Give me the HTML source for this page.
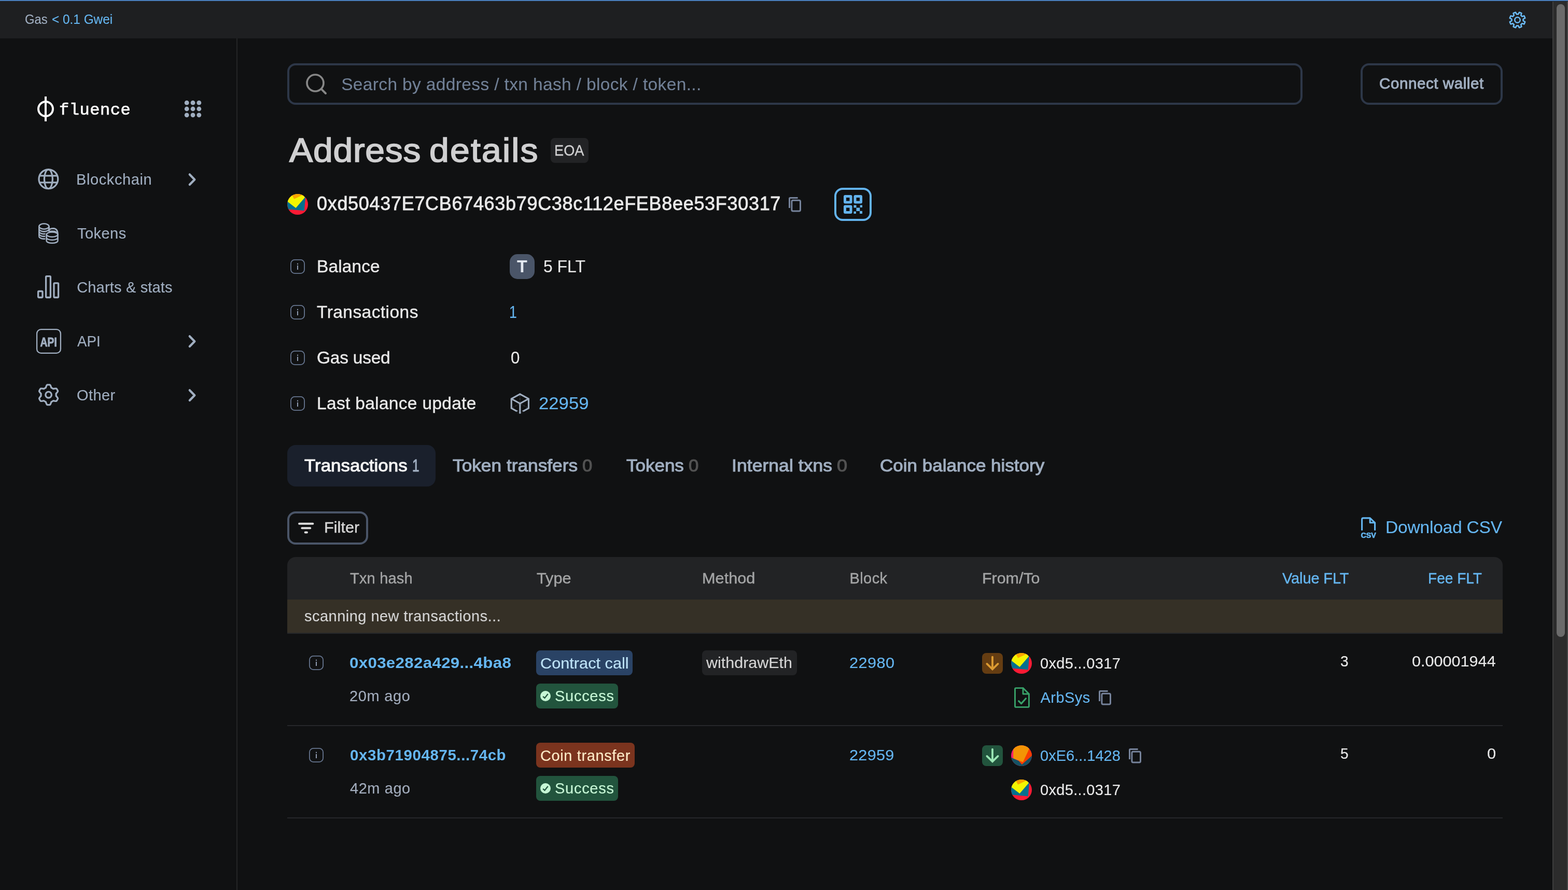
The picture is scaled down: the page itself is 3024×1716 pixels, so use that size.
<!DOCTYPE html>
<html lang="en">
<head>
<meta charset="utf-8">
<title>Address details - Fluence Explorer</title>
<style>
html,body{margin:0;padding:0;background:#101112;}
body{width:3024px;height:1716px;overflow:hidden;position:relative;font-family:"Liberation Sans", sans-serif;}
#app{position:absolute;left:0;top:0;width:3024px;height:1716px;overflow:hidden;will-change:transform;}
.a{position:absolute;box-sizing:border-box;}
.t{white-space:pre;margin:0;padding:0;font-weight:400;}
</style>
</head>
<body>
<div id="app">
<div class="a" style="left:0px;top:0px;width:2994px;height:74px;background:#1e1f21;"></div>
<div class="a" style="left:0px;top:0px;width:3024px;height:2px;background:#4a7fbd;"></div>
<div class="a" style="left:0px;top:2px;width:3024px;height:1px;background:#191a1b;"></div>
<span class="a t" style='left:48.00px;top:25px;color:#a0aec0;font-size:25px;line-height:25px;transform:scaleX(0.9545);transform-origin:0 0;-webkit-text-stroke:0.14px #a0aec0;'>Gas</span>
<span class="a t" style='left:99.50px;top:25px;color:#65b6f1;font-size:25px;line-height:25px;transform:scaleX(0.9745);transform-origin:0 0;-webkit-text-stroke:0.14px #65b6f1;'>&lt; 0.1 Gwei</span>
<div class="a" style="left:2994px;top:3px;width:30px;height:1713px;background:#2c2c2c;"></div>
<div class="a" style="left:2994px;top:3px;width:2px;height:1713px;background:#3e3e3e;"></div>
<div class="a" style="left:3022px;top:3px;width:2px;height:1713px;background:#474747;"></div>
<div class="a" style="left:3002px;top:8px;width:16px;height:1220px;background:#6b6b6b;border-radius:8px;"></div>
<div class="a" style="left:456px;top:74px;width:2px;height:1642px;background:#242526;"></div>
<svg class="a" style="left:68px;top:182px;" width="40" height="56" viewBox="0 0 40 56"><circle cx="20" cy="28" r="14" fill="none" stroke="#fff" stroke-width="4"/><rect x="18" y="4" width="4" height="48" fill="#fff"/></svg>
<span class="a t" style='left:114.34px;top:197px;color:#ffffff;font-size:32px;line-height:32px;font-family:"Liberation Mono", monospace;letter-spacing:0.583px;transform:scaleX(0.9988);transform-origin:0 0;-webkit-text-stroke:0.7px #ffffff;'>fluence</span>
<svg class="a" style="left:354px;top:192px;" width="36" height="36" viewBox="0 0 36 36"><circle cx="6.2" cy="6.2" r="4.4" fill="#a0aec0"/><circle cx="18" cy="6.2" r="4.4" fill="#a0aec0"/><circle cx="29.8" cy="6.2" r="4.4" fill="#a0aec0"/><circle cx="6.2" cy="18" r="4.4" fill="#a0aec0"/><circle cx="18" cy="18" r="4.4" fill="#a0aec0"/><circle cx="29.8" cy="18" r="4.4" fill="#a0aec0"/><circle cx="6.2" cy="29.8" r="4.4" fill="#a0aec0"/><circle cx="18" cy="29.8" r="4.4" fill="#a0aec0"/><circle cx="29.8" cy="29.8" r="4.4" fill="#a0aec0"/></svg>
<span class="a t" style='left:147.17px;top:332px;color:#a0aec0;font-size:29px;line-height:29px;letter-spacing:0.611px;transform:scaleX(0.9988);transform-origin:0 0;-webkit-text-stroke:0.14px #a0aec0;'>Blockchain</span>
<svg class="a" style="left:356px;top:330px;" width="28" height="32" viewBox="0 0 28 32"><path d="M9.8 6.4 L19.3 16.2 L9.8 26" fill="none" stroke="#a0aec0" stroke-width="4.3" stroke-linecap="round" stroke-linejoin="round"/></svg>
<span class="a t" style='left:148.83px;top:436px;color:#a0aec0;font-size:29px;line-height:29px;letter-spacing:0.433px;transform:scaleX(1.0018);transform-origin:0 0;-webkit-text-stroke:0.14px #a0aec0;'>Tokens</span>
<span class="a t" style='left:148.17px;top:540px;color:#a0aec0;font-size:29px;line-height:29px;letter-spacing:0.179px;-webkit-text-stroke:0.14px #a0aec0;'>Charts &amp; stats</span>
<span class="a t" style='left:149.00px;top:644px;color:#a0aec0;font-size:29px;line-height:29px;transform:scaleX(0.9534);transform-origin:0 0;-webkit-text-stroke:0.14px #a0aec0;'>API</span>
<svg class="a" style="left:356px;top:642px;" width="28" height="32" viewBox="0 0 28 32"><path d="M9.8 6.4 L19.3 16.2 L9.8 26" fill="none" stroke="#a0aec0" stroke-width="4.3" stroke-linecap="round" stroke-linejoin="round"/></svg>
<span class="a t" style='left:148.17px;top:748px;color:#a0aec0;font-size:29px;line-height:29px;letter-spacing:0.458px;transform:scaleX(0.9977);transform-origin:0 0;-webkit-text-stroke:0.14px #a0aec0;'>Other</span>
<svg class="a" style="left:356px;top:746px;" width="28" height="32" viewBox="0 0 28 32"><path d="M9.8 6.4 L19.3 16.2 L9.8 26" fill="none" stroke="#a0aec0" stroke-width="4.3" stroke-linecap="round" stroke-linejoin="round"/></svg>
<div class="a" style="left:554px;top:122px;width:1958px;height:80px;border-radius:16px;border:4px solid #2d3748;"></div>
<svg class="a" style="left:586px;top:138px;" width="48" height="48" viewBox="0 0 48 48"><circle cx="22" cy="22" r="16" fill="none" stroke="#878787" stroke-width="3.7"/><path d="M33.6 33.6 L42 42" stroke="#878787" stroke-width="4" stroke-linecap="round"/></svg>
<span class="a t" style='left:658.17px;top:146px;color:#718096;font-size:33.5px;line-height:33.5px;letter-spacing:0.355px;-webkit-text-stroke:0.14px #718096;'>Search by address / txn hash / block / token...</span>
<div class="a" style="left:2624px;top:122px;width:274px;height:80px;border-radius:16px;border:4px solid #2d3748;"></div>
<span class="a t" style='left:2659.50px;top:146px;color:#a0aec0;font-size:29.5px;line-height:29.5px;letter-spacing:0.577px;transform:scaleX(1.0008);transform-origin:0 0;-webkit-text-stroke:1.0px #a0aec0;'>Connect wallet</span>
<h1 style="margin:0;font-size:inherit;font-weight:inherit">
<span class="a t" style='left:558.00px;top:258px;color:#d0d0d1;font-size:64px;line-height:64px;letter-spacing:0.724px;transform:scaleX(1.0600);transform-origin:0 0;-webkit-text-stroke:1.7px #d0d0d1;'>Address </span>
<span class="a t" style='left:827.50px;top:258px;color:#d0d0d1;font-size:64px;line-height:64px;letter-spacing:2.057px;transform:scaleX(1.0617);transform-origin:0 0;-webkit-text-stroke:1.7px #d0d0d1;'>details</span>
</h1>
<div class="a" style="left:1062px;top:266px;width:73px;height:48px;background:#222325;border-radius:8px;"></div>
<span class="a t" style='left:1068.51px;top:276px;color:#d0d0d1;font-size:29px;line-height:29px;transform:scaleX(0.9379);transform-origin:0 0;-webkit-text-stroke:0.3px #d0d0d1;'>EOA</span>
<span class="a t" style='left:611.00px;top:375px;color:#e9e9e9;font-size:36px;line-height:36px;letter-spacing:0.691px;-webkit-text-stroke:0.8px #e9e9e9;'>0xd50437E7CB67463b79C38c112eFEB8ee53F30317</span>
<span class="a t" style='left:610.73px;top:497px;color:#e9e9e9;font-size:33.5px;line-height:33.5px;letter-spacing:0.100px;transform:scaleX(0.9994);transform-origin:0 0;-webkit-text-stroke:0.4px #e9e9e9;'>Balance</span>
<span class="a t" style='left:611.33px;top:585px;color:#e9e9e9;font-size:33.5px;line-height:33.5px;letter-spacing:0.448px;transform:scaleX(0.9997);transform-origin:0 0;-webkit-text-stroke:0.4px #e9e9e9;'>Transactions</span>
<span class="a t" style='left:610.67px;top:673px;color:#e9e9e9;font-size:33.5px;line-height:33.5px;letter-spacing:-0.214px;transform:scaleX(0.9988);transform-origin:0 0;-webkit-text-stroke:0.4px #e9e9e9;'>Gas used</span>
<span class="a t" style='left:610.74px;top:761px;color:#e9e9e9;font-size:33.5px;line-height:33.5px;letter-spacing:0.335px;transform:scaleX(0.9990);transform-origin:0 0;-webkit-text-stroke:0.4px #e9e9e9;'>Last balance update</span>
<div class="a" style="left:983px;top:490px;width:48px;height:48px;background:#4a5568;border-radius:15px;"></div>
<span class="a t" style='left:997.17px;top:497px;color:#e4e9f1;font-size:33px;line-height:33px;font-weight:700;transform:scaleX(0.9828);transform-origin:0 0;'>T</span>
<span class="a t" style='left:1047.86px;top:497px;color:#e9e9e9;font-size:33.5px;line-height:33.5px;transform:scaleX(0.9510);transform-origin:0 0;-webkit-text-stroke:0.14px #e9e9e9;'>5 FLT</span>
<span class="a t" style='left:982.47px;top:585px;color:#65b6f1;font-size:33.5px;line-height:33.5px;transform:scaleX(0.7956);transform-origin:0 0;-webkit-text-stroke:0.14px #65b6f1;'>1</span>
<span class="a t" style='left:984.52px;top:673px;color:#e9e9e9;font-size:33.5px;line-height:33.5px;transform:scaleX(0.9339);transform-origin:0 0;-webkit-text-stroke:0.14px #e9e9e9;'>0</span>
<span class="a t" style='left:1039.33px;top:761px;color:#65b6f1;font-size:33.5px;line-height:33.5px;transform:scaleX(1.0363);transform-origin:0 0;-webkit-text-stroke:0.14px #65b6f1;'>22959</span>
<div class="a" style="left:554px;top:858px;width:286px;height:80px;background:#1a202c;border-radius:16px;"></div>
<span class="a t" style='left:587.17px;top:881px;color:#f4f4f4;font-size:33.5px;line-height:33.5px;transform:scaleX(1.0423);transform-origin:0 0;-webkit-text-stroke:1.05px #f4f4f4;'>Transactions</span>
<span class="a t" style='left:794.69px;top:881px;color:#a0aec0;font-size:33.5px;line-height:33.5px;transform:scaleX(0.7236);transform-origin:0 0;-webkit-text-stroke:1.05px #a0aec0;'>1</span>
<span class="a t" style='left:873.17px;top:881px;color:#a0aec0;font-size:33.5px;line-height:33.5px;transform:scaleX(1.0526);transform-origin:0 0;-webkit-text-stroke:1.05px #a0aec0;'>Token transfers</span>
<span class="a t" style='left:1123.33px;top:881px;color:#525252;font-size:33.5px;line-height:33.5px;transform:scaleX(1.0385);transform-origin:0 0;-webkit-text-stroke:1.05px #525252;'>0</span>
<span class="a t" style='left:1208.17px;top:881px;color:#a0aec0;font-size:33.5px;line-height:33.5px;transform:scaleX(1.0445);transform-origin:0 0;-webkit-text-stroke:1.05px #a0aec0;'>Tokens</span>
<span class="a t" style='left:1328.33px;top:881px;color:#525252;font-size:33.5px;line-height:33.5px;transform:scaleX(1.0385);transform-origin:0 0;-webkit-text-stroke:1.05px #525252;'>0</span>
<span class="a t" style='left:1410.84px;top:881px;color:#a0aec0;font-size:33.5px;line-height:33.5px;letter-spacing:0.060px;transform:scaleX(1.0591);transform-origin:0 0;-webkit-text-stroke:1.05px #a0aec0;'>Internal txns</span>
<span class="a t" style='left:1613.83px;top:881px;color:#525252;font-size:33.5px;line-height:33.5px;transform:scaleX(1.0770);transform-origin:0 0;-webkit-text-stroke:1.05px #525252;'>0</span>
<span class="a t" style='left:1697.17px;top:881px;color:#a0aec0;font-size:33.5px;line-height:33.5px;transform:scaleX(1.0451);transform-origin:0 0;-webkit-text-stroke:1.05px #a0aec0;'>Coin balance history</span>
<div class="a" style="left:554px;top:986px;width:156px;height:64px;border-radius:16px;border:4px solid #4a5568;"></div>
<svg class="a" style="left:572px;top:1002px;" width="36" height="32" viewBox="0 0 36 32"><path d="M5 7.7H31.4M10.3 16.2H26.3M16.6 24.5H20" stroke="#dcdcdc" stroke-width="3.9" stroke-linecap="round" fill="none"/></svg>
<span class="a t" style='left:625.17px;top:1003px;color:#d8d8d8;font-size:29px;line-height:29px;letter-spacing:0.025px;transform:scaleX(1.0573);transform-origin:0 0;-webkit-text-stroke:0.35px #d8d8d8;'>Filter</span>
<span class="a t" style='left:2672.03px;top:1000px;color:#65b6f1;font-size:33.5px;line-height:33.5px;letter-spacing:-0.185px;transform:scaleX(0.9999);transform-origin:0 0;-webkit-text-stroke:0.14px #65b6f1;'>Download CSV</span>
<div class="a" style="left:554px;top:1074px;width:2344px;height:82px;background:#222325;border-radius:16px 16px 0 0;"></div>
<span class="a t" style='left:675.17px;top:1101px;color:#a4a5a6;font-size:29px;line-height:29px;letter-spacing:0.167px;transform:scaleX(1.0014);transform-origin:0 0;-webkit-text-stroke:0.4px #a4a5a6;'>Txn hash</span>
<span class="a t" style='left:1034.67px;top:1101px;color:#a4a5a6;font-size:29px;line-height:29px;transform:scaleX(1.0598);transform-origin:0 0;-webkit-text-stroke:0.4px #a4a5a6;'>Type</span>
<span class="a t" style='left:1353.97px;top:1101px;color:#a4a5a6;font-size:29px;line-height:29px;transform:scaleX(1.0588);transform-origin:0 0;-webkit-text-stroke:0.4px #a4a5a6;'>Method</span>
<span class="a t" style='left:1638.50px;top:1101px;color:#a4a5a6;font-size:29px;line-height:29px;letter-spacing:0.417px;-webkit-text-stroke:0.4px #a4a5a6;'>Block</span>
<span class="a t" style='left:1893.66px;top:1101px;color:#a4a5a6;font-size:29px;line-height:29px;transform:scaleX(1.0484);transform-origin:0 0;-webkit-text-stroke:0.4px #a4a5a6;'>From/To</span>
<span class="a t" style='left:2473.00px;top:1101px;color:#65b6f1;font-size:29px;line-height:29px;letter-spacing:-0.125px;-webkit-text-stroke:0.4px #65b6f1;'>Value FLT</span>
<span class="a t" style='left:2753.50px;top:1101px;color:#65b6f1;font-size:29px;line-height:29px;transform:scaleX(0.9683);transform-origin:0 0;-webkit-text-stroke:0.4px #65b6f1;'>Fee FLT</span>
<div class="a" style="left:554px;top:1156px;width:2344px;height:64px;background:#353026;"></div>
<div class="a" style="left:554px;top:1220px;width:2344px;height:2px;background:#26272a;"></div>
<span class="a t" style='left:586.83px;top:1174px;color:#d6d6d6;font-size:29px;line-height:29px;letter-spacing:0.475px;transform:scaleX(0.9996);transform-origin:0 0;-webkit-text-stroke:0.14px #d6d6d6;'>scanning new transactions...</span>
<span class="a t" style='left:674.16px;top:1263px;color:#65b6f1;font-size:29.5px;line-height:29.5px;font-weight:700;letter-spacing:0.277px;transform:scaleX(1.0617);transform-origin:0 0;'>0x03e282a429...4ba8</span>
<span class="a t" style='left:674.17px;top:1328px;color:#a3adbd;font-size:29px;line-height:29px;letter-spacing:0.694px;transform:scaleX(0.9985);transform-origin:0 0;-webkit-text-stroke:0.14px #a3adbd;'>20m ago</span>
<div class="a" style="left:1034px;top:1254px;width:186px;height:48px;background:#2a4365;border-radius:8px;"></div>
<span class="a t" style='left:1042.17px;top:1265px;color:#bee3f8;font-size:29px;line-height:29px;transform:scaleX(1.0589);transform-origin:0 0;-webkit-text-stroke:0.14px #bee3f8;'>Contract call</span>
<div class="a" style="left:1034px;top:1318px;width:158px;height:48px;background:#22543d;border-radius:8px;"></div>
<svg class="a" style="left:1041px;top:1331px;" width="22" height="22" viewBox="0 0 22 22"><circle cx="11" cy="11" r="10" fill="#c6f6d5"/><path d="M6.2 11.8 L9.5 14.9 L15.7 7" fill="none" stroke="#22543d" stroke-width="2.3" stroke-linecap="butt" stroke-linejoin="miter"/></svg>
<span class="a t" style='left:1070.16px;top:1328px;color:#c6f6d5;font-size:29px;line-height:29px;letter-spacing:0.694px;transform:scaleX(1.0015);transform-origin:0 0;-webkit-text-stroke:0.14px #c6f6d5;'>Success</span>
<div class="a" style="left:1354px;top:1254px;width:183px;height:48px;background:#222325;border-radius:8px;"></div>
<span class="a t" style='left:1362.00px;top:1264px;color:#d6d6d6;font-size:29px;line-height:29px;transform:scaleX(1.0512);transform-origin:0 0;-webkit-text-stroke:0.14px #d6d6d6;'>withdrawEth</span>
<span class="a t" style='left:1638.17px;top:1264px;color:#65b6f1;font-size:29px;line-height:29px;letter-spacing:0.417px;transform:scaleX(1.0575);transform-origin:0 0;-webkit-text-stroke:0.14px #65b6f1;'>22980</span>
<div class="a" style="left:554px;top:1398px;width:2344px;height:2px;background:#26272a;"></div>
<span class="a t" style='left:674.50px;top:1441px;color:#65b6f1;font-size:29.5px;line-height:29.5px;font-weight:700;letter-spacing:0.583px;transform:scaleX(0.9994);transform-origin:0 0;'>0x3b71904875...74cb</span>
<span class="a t" style='left:674.83px;top:1506px;color:#a3adbd;font-size:29px;line-height:29px;letter-spacing:0.583px;transform:scaleX(0.9985);transform-origin:0 0;-webkit-text-stroke:0.14px #a3adbd;'>42m ago</span>
<div class="a" style="left:1034px;top:1432px;width:190px;height:48px;background:#7b341e;border-radius:8px;"></div>
<span class="a t" style='left:1042.17px;top:1443px;color:#feebc8;font-size:29px;line-height:29px;letter-spacing:0.597px;transform:scaleX(1.0010);transform-origin:0 0;-webkit-text-stroke:0.14px #feebc8;'>Coin transfer</span>
<div class="a" style="left:1034px;top:1496px;width:158px;height:48px;background:#22543d;border-radius:8px;"></div>
<svg class="a" style="left:1041px;top:1509px;" width="22" height="22" viewBox="0 0 22 22"><circle cx="11" cy="11" r="10" fill="#c6f6d5"/><path d="M6.2 11.8 L9.5 14.9 L15.7 7" fill="none" stroke="#22543d" stroke-width="2.3" stroke-linecap="butt" stroke-linejoin="miter"/></svg>
<span class="a t" style='left:1070.16px;top:1506px;color:#c6f6d5;font-size:29px;line-height:29px;letter-spacing:0.694px;transform:scaleX(1.0015);transform-origin:0 0;-webkit-text-stroke:0.14px #c6f6d5;'>Success</span>
<span class="a t" style='left:1638.17px;top:1442px;color:#65b6f1;font-size:29px;line-height:29px;letter-spacing:0.264px;transform:scaleX(1.0575);transform-origin:0 0;-webkit-text-stroke:0.14px #65b6f1;'>22959</span>
<div class="a" style="left:554px;top:1576px;width:2344px;height:2px;background:#26272a;"></div>
<div class="a" style="left:1894px;top:1259px;width:40px;height:40px;background:#653d12;border-radius:8px;"></div>
<div class="a" style="left:1894px;top:1437px;width:40px;height:40px;background:#22543d;border-radius:8px;"></div>
<span class="a t" style='left:2005.50px;top:1265px;color:#e9e9e9;font-size:29px;line-height:29px;letter-spacing:0.317px;transform:scaleX(1.0011);transform-origin:0 0;-webkit-text-stroke:0.14px #e9e9e9;'>0xd5...0317</span>
<span class="a t" style='left:2006.50px;top:1331px;color:#65b6f1;font-size:29px;line-height:29px;letter-spacing:0.467px;-webkit-text-stroke:0.14px #65b6f1;'>ArbSys</span>
<span class="a t" style='left:2005.50px;top:1443px;color:#65b6f1;font-size:29px;line-height:29px;letter-spacing:-0.017px;transform:scaleX(1.0011);transform-origin:0 0;-webkit-text-stroke:0.14px #65b6f1;'>0xE6...1428</span>
<span class="a t" style='left:2005.50px;top:1509px;color:#e9e9e9;font-size:29px;line-height:29px;letter-spacing:0.317px;transform:scaleX(1.0011);transform-origin:0 0;-webkit-text-stroke:0.14px #e9e9e9;'>0xd5...0317</span>
<span class="a t" style='left:2585.20px;top:1261px;color:#e9e9e9;font-size:29px;line-height:29px;transform:scaleX(0.9667);transform-origin:0 0;-webkit-text-stroke:0.14px #e9e9e9;'>3</span>
<span class="a t" style='left:2722.50px;top:1261px;color:#e9e9e9;font-size:29px;line-height:29px;transform:scaleX(1.0551);transform-origin:0 0;-webkit-text-stroke:0.14px #e9e9e9;'>0.00001944</span>
<span class="a t" style='left:2585.20px;top:1439px;color:#e9e9e9;font-size:29px;line-height:29px;transform:scaleX(0.9667);transform-origin:0 0;-webkit-text-stroke:0.14px #e9e9e9;'>5</span>
<span class="a t" style='left:2867.72px;top:1439px;color:#e9e9e9;font-size:29px;line-height:29px;transform:scaleX(1.0622);transform-origin:0 0;-webkit-text-stroke:0.14px #e9e9e9;'>0</span>
<svg class="a" style="left:2906px;top:18px;" width="42" height="42" viewBox="0 0 42 42"><path d="M31.58 22.14 L35.28 24.05 L33.46 28.44 L29.50 27.17 L27.17 29.50 L28.44 33.46 L24.05 35.28 L22.14 31.58 L18.86 31.58 L16.95 35.28 L12.56 33.46 L13.83 29.50 L11.50 27.17 L7.54 28.44 L5.72 24.05 L9.42 22.14 L9.42 18.86 L5.72 16.95 L7.54 12.56 L11.50 13.83 L13.83 11.50 L12.56 7.54 L16.95 5.72 L18.86 9.42 L22.14 9.42 L24.05 5.72 L28.44 7.54 L27.17 11.50 L29.50 13.83 L33.46 12.56 L35.28 16.95 L31.58 18.86 Z" fill="none" stroke="#6cbcf7" stroke-width="2.6" stroke-linejoin="round"/><circle cx="20.5" cy="20.5" r="5.2" fill="none" stroke="#6cbcf7" stroke-width="2.6"/></svg>
<svg class="a" style="left:70px;top:322px;" width="48" height="48" viewBox="0 0 48 48"><g fill="none" stroke="#a0aec0" stroke-width="3.3"><circle cx="23.4" cy="23.3" r="18.4"/><ellipse cx="23.4" cy="23.3" rx="8" ry="18.4"/><path d="M6 16.8H40.8M6 29.8H40.8"/></g></svg>
<svg class="a" style="left:70px;top:426px;" width="48" height="48" viewBox="0 0 48 48"><g fill="none" stroke="#a0aec0" stroke-width="2.6"><ellipse cx="14.9" cy="10.5" rx="9.6" ry="5.2"/><path d="M5.300000000000001 10.5 V29.38 M24.5 10.5 V29.38"/><path d="M5.300000000000001 15.219999999999999 A9.6 5.2 0 0 0 24.5 15.219999999999999"/><path d="M5.300000000000001 19.939999999999998 A9.6 5.2 0 0 0 24.5 19.939999999999998"/><path d="M5.300000000000001 24.66 A9.6 5.2 0 0 0 24.5 24.66"/><path d="M5.300000000000001 29.38 A9.6 5.2 0 0 0 24.5 29.38"/></g><path d="M17.25 26.1 A13.3 7.0 0 0 1 43.85 26.1 V38.2 A13.3 7.0 0 0 1 17.25 38.2 Z" fill="#101112"/><path d="M26.2 14 H44 V27 H26.2 Z" fill="#101112"/><g fill="none" stroke="#a0aec0" stroke-width="2.6"><path d="M24.5 10.5 V20.6"/><path d="M24.5 17.2 Q27.5 14.4 32.6 14.4 Q41.6 14.8 41.45 26.1"/><path d="M25.2 20.3 Q30 19.2 35 20.1 Q38 20.9 39.3 22.8"/><ellipse cx="30.55" cy="26.1" rx="10.9" ry="4.6"/><path d="M19.65 26.1 V38.2 M41.45 26.1 V38.2"/><path d="M19.65 32.15 A10.9 4.6 0 0 0 41.45 32.15"/><path d="M19.65 38.2 A10.9 4.6 0 0 0 41.45 38.2"/></g></svg>
<svg class="a" style="left:68px;top:526px;" width="52" height="54" viewBox="0 0 52 54"><g fill="none" stroke="#a0aec0" stroke-width="3.3" stroke-linejoin="round"><rect x="5.6" y="35.5" width="8.4" height="12" rx="1.5"/><rect x="20.6" y="6.6" width="8.8" height="40.9" rx="1.5"/><rect x="36" y="19.8" width="8.6" height="27.7" rx="1.5"/></g></svg>
<svg class="a" style="left:68px;top:632px;" width="52" height="52" viewBox="0 0 52 52"><rect x="3.1" y="3.1" width="45.8" height="45.8" rx="8" fill="none" stroke="#a0aec0" stroke-width="2.3"/><text x="25.7" y="35.6" text-anchor="middle" font-family="Liberation Sans, sans-serif" font-weight="700" font-size="24" textLength="32.4" lengthAdjust="spacingAndGlyphs" fill="#a0aec0" stroke="#a0aec0" stroke-width="0.9" stroke-linejoin="round">API</text></svg>
<svg class="a" style="left:70px;top:738px;" width="48" height="48" viewBox="0 0 48 48"><g fill="none" stroke="#a0aec0" stroke-width="3.3" stroke-linejoin="round"><path d="M23.60 3.80 L24.11 3.81 L24.62 3.83 L25.12 3.86 L25.63 3.91 L26.13 3.97 L26.61 4.18 L27.02 4.77 L27.38 5.41 L27.71 6.09 L28.00 6.78 L28.26 7.48 L28.49 8.16 L28.69 8.82 L28.88 9.44 L29.19 9.71 L29.54 9.86 L29.89 10.02 L30.23 10.19 L30.57 10.37 L30.90 10.56 L31.23 10.75 L31.55 10.96 L31.87 11.17 L32.18 11.39 L32.49 11.62 L32.88 11.74 L33.51 11.60 L34.18 11.45 L34.89 11.30 L35.62 11.18 L36.37 11.08 L37.12 11.03 L37.85 11.03 L38.57 11.08 L38.99 11.39 L39.29 11.80 L39.59 12.21 L39.87 12.63 L40.14 13.06 L40.40 13.50 L40.65 13.94 L40.89 14.39 L41.11 14.85 L41.32 15.31 L41.52 15.78 L41.58 16.30 L41.27 16.94 L40.90 17.58 L40.48 18.20 L40.02 18.80 L39.55 19.37 L39.07 19.91 L38.60 20.42 L38.16 20.89 L38.08 21.29 L38.12 21.67 L38.15 22.05 L38.18 22.44 L38.19 22.82 L38.20 23.20 L38.19 23.58 L38.18 23.96 L38.15 24.35 L38.12 24.73 L38.08 25.11 L38.16 25.51 L38.60 25.98 L39.07 26.49 L39.55 27.03 L40.02 27.60 L40.48 28.20 L40.90 28.82 L41.27 29.46 L41.58 30.10 L41.52 30.62 L41.32 31.09 L41.11 31.55 L40.89 32.01 L40.65 32.46 L40.40 32.90 L40.14 33.34 L39.87 33.77 L39.59 34.19 L39.29 34.60 L38.99 35.01 L38.57 35.32 L37.85 35.37 L37.12 35.37 L36.37 35.32 L35.62 35.22 L34.89 35.10 L34.18 34.95 L33.51 34.80 L32.88 34.66 L32.49 34.78 L32.18 35.01 L31.87 35.23 L31.55 35.44 L31.23 35.65 L30.90 35.84 L30.57 36.03 L30.23 36.21 L29.89 36.38 L29.54 36.54 L29.19 36.69 L28.88 36.96 L28.69 37.58 L28.49 38.24 L28.26 38.92 L28.00 39.62 L27.71 40.31 L27.38 40.99 L27.02 41.63 L26.61 42.22 L26.13 42.43 L25.63 42.49 L25.12 42.54 L24.62 42.57 L24.11 42.59 L23.60 42.60 L23.09 42.59 L22.58 42.57 L22.08 42.54 L21.57 42.49 L21.07 42.43 L20.59 42.22 L20.18 41.63 L19.82 40.99 L19.49 40.31 L19.20 39.62 L18.94 38.92 L18.71 38.24 L18.51 37.58 L18.32 36.96 L18.01 36.69 L17.66 36.54 L17.31 36.38 L16.97 36.21 L16.63 36.03 L16.30 35.84 L15.97 35.65 L15.65 35.44 L15.33 35.23 L15.02 35.01 L14.71 34.78 L14.32 34.66 L13.69 34.80 L13.02 34.95 L12.31 35.10 L11.58 35.22 L10.83 35.32 L10.08 35.37 L9.35 35.37 L8.63 35.32 L8.21 35.01 L7.91 34.60 L7.61 34.19 L7.33 33.77 L7.06 33.34 L6.80 32.90 L6.55 32.46 L6.31 32.01 L6.09 31.55 L5.88 31.09 L5.68 30.62 L5.62 30.10 L5.93 29.46 L6.30 28.82 L6.72 28.20 L7.18 27.60 L7.65 27.03 L8.13 26.49 L8.60 25.98 L9.04 25.51 L9.12 25.11 L9.08 24.73 L9.05 24.35 L9.02 23.96 L9.01 23.58 L9.00 23.20 L9.01 22.82 L9.02 22.44 L9.05 22.05 L9.08 21.67 L9.12 21.29 L9.04 20.89 L8.60 20.42 L8.13 19.91 L7.65 19.37 L7.18 18.80 L6.72 18.20 L6.30 17.58 L5.93 16.94 L5.62 16.30 L5.68 15.78 L5.88 15.31 L6.09 14.85 L6.31 14.39 L6.55 13.94 L6.80 13.50 L7.06 13.06 L7.33 12.63 L7.61 12.21 L7.91 11.80 L8.21 11.39 L8.63 11.08 L9.35 11.03 L10.08 11.03 L10.83 11.08 L11.58 11.18 L12.31 11.30 L13.02 11.45 L13.69 11.60 L14.32 11.74 L14.71 11.62 L15.02 11.39 L15.33 11.17 L15.65 10.96 L15.97 10.75 L16.30 10.56 L16.63 10.37 L16.97 10.19 L17.31 10.02 L17.66 9.86 L18.01 9.71 L18.32 9.44 L18.51 8.82 L18.71 8.16 L18.94 7.48 L19.20 6.78 L19.49 6.09 L19.82 5.41 L20.18 4.77 L20.59 4.18 L21.07 3.97 L21.57 3.91 L22.08 3.86 L22.58 3.83 L23.09 3.81 Z"/><circle cx="23.6" cy="23.2" r="5.8"/></g></svg>
<svg class="a" style="left:559px;top:499px;" width="30" height="30" viewBox="0 0 30 30"><rect x="1.9" y="1.9" width="26.2" height="26.2" rx="7.5" fill="none" stroke="#66758f" stroke-width="1.8"/><rect x="14" y="12.8" width="2" height="8.2" fill="#8f9bb0"/><rect x="14" y="8.8" width="2" height="2.1" fill="#8f9bb0"/></svg>
<svg class="a" style="left:559px;top:587px;" width="30" height="30" viewBox="0 0 30 30"><rect x="1.9" y="1.9" width="26.2" height="26.2" rx="7.5" fill="none" stroke="#66758f" stroke-width="1.8"/><rect x="14" y="12.8" width="2" height="8.2" fill="#8f9bb0"/><rect x="14" y="8.8" width="2" height="2.1" fill="#8f9bb0"/></svg>
<svg class="a" style="left:559px;top:675px;" width="30" height="30" viewBox="0 0 30 30"><rect x="1.9" y="1.9" width="26.2" height="26.2" rx="7.5" fill="none" stroke="#66758f" stroke-width="1.8"/><rect x="14" y="12.8" width="2" height="8.2" fill="#8f9bb0"/><rect x="14" y="8.8" width="2" height="2.1" fill="#8f9bb0"/></svg>
<svg class="a" style="left:559px;top:763px;" width="30" height="30" viewBox="0 0 30 30"><rect x="1.9" y="1.9" width="26.2" height="26.2" rx="7.5" fill="none" stroke="#66758f" stroke-width="1.8"/><rect x="14" y="12.8" width="2" height="8.2" fill="#8f9bb0"/><rect x="14" y="8.8" width="2" height="2.1" fill="#8f9bb0"/></svg>
<svg class="a" style="left:595px;top:1263px;" width="30" height="30" viewBox="0 0 30 30"><rect x="1.9" y="1.9" width="26.2" height="26.2" rx="7.5" fill="none" stroke="#66758f" stroke-width="1.8"/><rect x="14" y="12.8" width="2" height="8.2" fill="#8f9bb0"/><rect x="14" y="8.8" width="2" height="2.1" fill="#8f9bb0"/></svg>
<svg class="a" style="left:595px;top:1441px;" width="30" height="30" viewBox="0 0 30 30"><rect x="1.9" y="1.9" width="26.2" height="26.2" rx="7.5" fill="none" stroke="#66758f" stroke-width="1.8"/><rect x="14" y="12.8" width="2" height="8.2" fill="#8f9bb0"/><rect x="14" y="8.8" width="2" height="2.1" fill="#8f9bb0"/></svg>
<svg class="a" style="left:554px;top:374px;" width="40" height="40" viewBox="0 0 40 40"><clipPath id="c554_374"><circle cx="20" cy="20" r="20"/></clipPath><g clip-path="url(#c554_374)"><rect width="40" height="40" fill="#fc1a34"/><path d="M-2 13 L35.2 5 L32.8 32.2 L2 29.4 Z" fill="#03708f"/><path d="M0.5 14.8 L16.5 27 L34 6.8 L27 -2 L4 0 Z" fill="#f4f500"/><path d="M9.8 3.6 L13.2 9.8 L28.5 2.4 L24 -3 L10 -2 Z" fill="#fba400"/></g></svg>
<svg class="a" style="left:1950px;top:1259px;" width="40" height="40" viewBox="0 0 40 40"><clipPath id="c1950_1259"><circle cx="20" cy="20" r="20"/></clipPath><g clip-path="url(#c1950_1259)"><rect width="40" height="40" fill="#fc1a34"/><path d="M-2 13 L35.2 5 L32.8 32.2 L2 29.4 Z" fill="#03708f"/><path d="M0.5 14.8 L16.5 27 L34 6.8 L27 -2 L4 0 Z" fill="#f4f500"/><path d="M9.8 3.6 L13.2 9.8 L28.5 2.4 L24 -3 L10 -2 Z" fill="#fba400"/></g></svg>
<svg class="a" style="left:1950px;top:1503px;" width="40" height="40" viewBox="0 0 40 40"><clipPath id="c1950_1503"><circle cx="20" cy="20" r="20"/></clipPath><g clip-path="url(#c1950_1503)"><rect width="40" height="40" fill="#fc1a34"/><path d="M-2 13 L35.2 5 L32.8 32.2 L2 29.4 Z" fill="#03708f"/><path d="M0.5 14.8 L16.5 27 L34 6.8 L27 -2 L4 0 Z" fill="#f4f500"/><path d="M9.8 3.6 L13.2 9.8 L28.5 2.4 L24 -3 L10 -2 Z" fill="#fba400"/></g></svg>
<svg class="a" style="left:1950px;top:1437px;" width="40" height="40" viewBox="0 0 40 40"><clipPath id="c1950_1437"><circle cx="20" cy="20" r="20"/></clipPath><g clip-path="url(#c1950_1437)"><rect width="40" height="40" fill="#fb1f6c"/><path d="M-2 22.5 L4.2 25.3 L14.8 30 L20.8 36.7 L41 18.5 L42 42 L-2 42 Z" fill="#155263"/><path d="M34.5 6.5 L42 18.5 L20.8 36.9 L14.5 29.5 Z" fill="#fa3c00"/><path d="M4.3 -2 L36 -2 L34.8 7 L22.8 32.6 L4.2 25.3 Z" fill="#f39405"/></g></svg>
<svg class="a" style="left:1520px;top:379px;" width="26" height="30" viewBox="0 0 26 30"><g fill="none" stroke="#76839b" stroke-width="3"><path d="M2.5 22 V4 Q2.5 2.5 4 2.5 H18.6"/><rect x="6.9" y="7.2" width="16.6" height="20.8" rx="2.4"/></g></svg>
<svg class="a" style="left:2118px;top:1330px;" width="26" height="30" viewBox="0 0 26 30"><g fill="none" stroke="#76839b" stroke-width="3"><path d="M2.5 22 V4 Q2.5 2.5 4 2.5 H18.6"/><rect x="6.9" y="7.2" width="16.6" height="20.8" rx="2.4"/></g></svg>
<svg class="a" style="left:2176px;top:1442px;" width="26" height="30" viewBox="0 0 26 30"><g fill="none" stroke="#76839b" stroke-width="3"><path d="M2.5 22 V4 Q2.5 2.5 4 2.5 H18.6"/><rect x="6.9" y="7.2" width="16.6" height="20.8" rx="2.4"/></g></svg>
<div class="a" style="left:1609px;top:362px;width:72px;height:64px;border-radius:16px;border:4px solid #63b3ed;"></div>
<svg class="a" style="left:1627px;top:376px;" width="36" height="36" viewBox="0 0 36 36"><g fill="#63b3ed"><path fill-rule="evenodd" d="M3 0 h10.5 a3 3 0 0 1 3 3 v10.5 a3 3 0 0 1 -3 3 h-10.5 a3 3 0 0 1 -3 -3 v-10.5 a3 3 0 0 1 3 -3 Z M5 5 v6.5 h6.5 v-6.5 Z"/><path fill-rule="evenodd" d="M22.5 0 h10.5 a3 3 0 0 1 3 3 v10.5 a3 3 0 0 1 -3 3 h-10.5 a3 3 0 0 1 -3 -3 v-10.5 a3 3 0 0 1 3 -3 Z M24.5 5 v6.5 h6.5 v-6.5 Z"/><path fill-rule="evenodd" d="M3 19.5 h10.5 a3 3 0 0 1 3 3 v10.5 a3 3 0 0 1 -3 3 h-10.5 a3 3 0 0 1 -3 -3 v-10.5 a3 3 0 0 1 3 -3 Z M5 24.5 v6.5 h6.5 v-6.5 Z"/><rect x="19.5" y="19.5" width="5" height="5"/><rect x="31.6" y="19.5" width="4.4" height="4.4"/><rect x="24.5" y="24.5" width="6.8" height="6.5"/><rect x="19.5" y="31.6" width="4.4" height="4.4"/><rect x="31" y="30.8" width="5" height="5.2"/></g></svg>
<svg class="a" style="left:982px;top:755px;" width="42" height="46" viewBox="0 0 42 46"><g fill="none" stroke="#a0aec0" stroke-width="3.1" stroke-linejoin="miter"><path d="M20.85 4.8 L37.45 13.9 V32.1 L20.85 41.2 L4.25 32.1 V13.9 Z"/><path d="M4.25 13.9 L20.85 23 L37.45 13.9 M20.85 23 V41.6"/></g><g fill="none" stroke="#a0aec0" stroke-width="0.9" stroke-dasharray="3.4 2.2" opacity="0.5"><path d="M20.85 7 V20.5 M6.5 31 L18.4 24.6 M35.2 31 L23.3 24.6"/></g><path d="M13.5 39 L19.1 42.3 L19.1 36.6 Z M28.2 39 L22.6 42.3 L22.6 36.6 Z" fill="#101112"/></svg>
<svg class="a" style="left:2620px;top:994px;" width="38" height="46" viewBox="0 0 38 46"><g fill="none" stroke="#65b6f1" stroke-width="3.1" stroke-linejoin="round" stroke-linecap="round"><path d="M6.6 27.5 V7.2 Q6.6 4.9 8.9 4.9 H22.2 L31.6 13.8 V27.5"/><path d="M22.2 5.5 V13.8 H31.2"/></g><text x="19.2" y="43" text-anchor="middle" font-family="Liberation Sans, sans-serif" font-weight="700" font-size="15" textLength="29.4" lengthAdjust="spacingAndGlyphs" fill="#65b6f1" stroke="#65b6f1" stroke-width="0.7">CSV</text></svg>
<svg class="a" style="left:1894px;top:1259px;" width="40" height="40" viewBox="0 0 40 40"><path d="M20 7.6 V30.6 M9.4 20.9 L20 31.4 L30.6 20.9" fill="none" stroke="#dd9b31" stroke-width="3.8" stroke-linecap="round" stroke-linejoin="miter"/></svg>
<svg class="a" style="left:1894px;top:1437px;" width="40" height="40" viewBox="0 0 40 40"><path d="M20 7.6 V30.6 M9.4 20.9 L20 31.4 L30.6 20.9" fill="none" stroke="#9ae6b4" stroke-width="3.8" stroke-linecap="round" stroke-linejoin="miter"/></svg>
<svg class="a" style="left:1952px;top:1322px;" width="38" height="46" viewBox="0 0 38 46"><g fill="none" stroke="#38a169" stroke-width="2.9" stroke-linejoin="round" stroke-linecap="round"><path d="M7.5 4.6 H21 L32.4 16 V39.4 Q32.4 41.4 30.4 41.4 H7.5 Q5.5 41.4 5.5 39.4 V6.6 Q5.5 4.6 7.5 4.6 Z"/><path d="M21 5 V16 H32"/><path d="M12.6 29.6 L17.6 34.6 L26.4 24.8" stroke-width="3.2"/></g></svg>
</div>
</body>
</html>
